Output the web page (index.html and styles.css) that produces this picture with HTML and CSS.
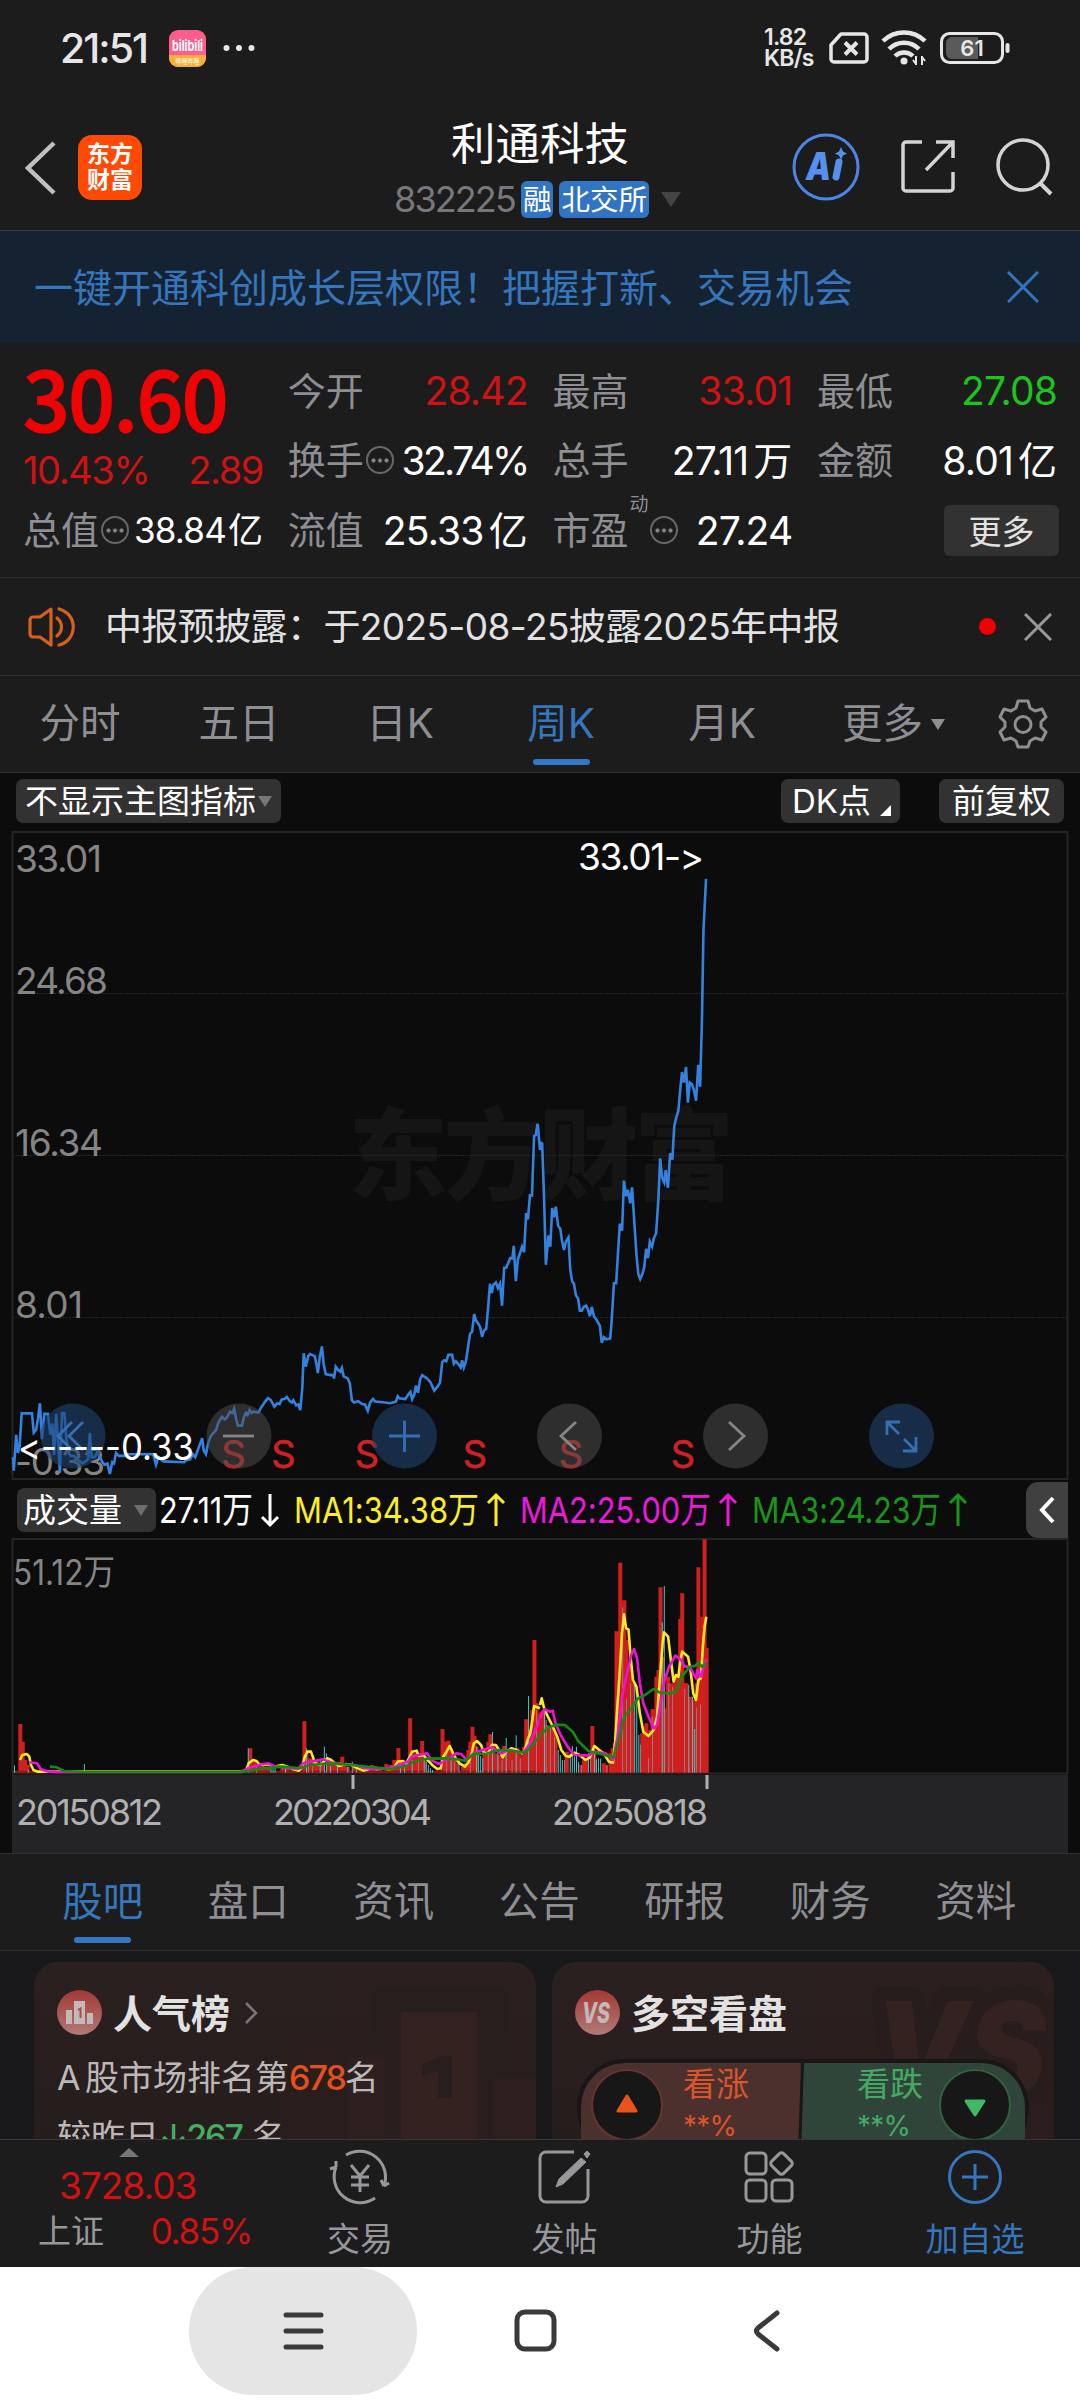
FILE: index.html
```html
<!DOCTYPE html>
<html lang="zh-CN">
<head>
    <meta charset="UTF-8">
    <meta name="viewport" content="width=device-width, initial-scale=1.0">
    <title>利通科技 832225</title>
    <link rel="stylesheet" href="styles.css">
</head>
<body>
    <div class="status-bar">
        <span class="clock">21:51</span>
        <svg class="bili" width="37" height="37" viewBox="0 0 37 37">
            <rect width="37" height="37" rx="9" fill="#fb5d8d"/>
            <path d="M0 25H37V28a9 9 0 0 1-9 9H9a9 9 0 0 1-9-9z" fill="#f5b03c"/>
            <text x="3" y="21" class="bili-name" textLength="31" lengthAdjust="spacingAndGlyphs">bilibili</text>
            <text x="6.500" y="34" class="bili-sub" textLength="24" lengthAdjust="spacingAndGlyphs">哔哩哔哩</text>
        </svg>
        <svg width="32" height="8" viewBox="0 0 32 8" fill="#e6e6e6">
            <circle cx="3.500" cy="4" r="3"/><circle cx="16" cy="4" r="3"/><circle cx="28.500" cy="4" r="3"/>
        </svg>
        <div class="status-right">
            <div class="speed"><span>1.82</span><span>KB/s</span></div>
            <svg width="40" height="32" viewBox="0 0 40 32" fill="none" stroke="#e6e6e6" stroke-width="3.500">
                <path d="M12 2H35a3 3 0 0 1 3 3V27a3 3 0 0 1-3 3H5a3 3 0 0 1-3-3V13z" stroke-linejoin="round"/>
                <path d="M16 10.500l12 12M28 10.500l-12 12" stroke-width="4"/>
            </svg>
            <svg class="wifi" width="47" height="36" viewBox="0 0 47 36" fill="none" stroke="#e6e6e6" stroke-width="4.500">
                <path d="M2 11a30 30 0 0 1 42 0M8 19a21 21 0 0 1 30 0M14 26a13 13 0 0 1 18 0"/>
                <circle cx="23" cy="31" r="3.500" fill="#e6e6e6" stroke="none"/>
                <path d="M35 26v9M35 34l-3-4M41 35v-9M41 27l3 4" stroke-width="2"/>
            </svg>
            <svg width="71" height="32" viewBox="0 0 71 32">
                <rect x="1.500" y="1.500" width="61" height="29" rx="8" fill="none" stroke="#e6e6e6" stroke-width="3"/>
                <path d="M12 5H38V27H12a6 6 0 0 1-6-6V11a6 6 0 0 1 6-6z" fill="#5a5a5a"/>
                <rect x="65.500" y="11" width="4" height="10" rx="2" fill="#e6e6e6"/>
                <text x="32" y="24" text-anchor="middle" class="battery-text">61</text>
            </svg>
        </div>
    </div>

    <header class="header">
        <div class="header-left">
            <svg width="32" height="54" viewBox="0 0 32 54" fill="none" stroke="#c0c0c0" stroke-width="4.500"><path d="M30 2L4 27l26 25"/></svg>
            <div class="logo"><span>东方</span><span>财富</span></div>
        </div>
        <div class="header-title">
            <h1>利通科技</h1>
            <div class="header-sub">
                <span class="code">832225</span>
                <span class="tag">融</span>
                <span class="tag">北交所</span>
                <svg width="20" height="15" viewBox="0 0 20 15"><path d="M0 0H20L10 15z" fill="#444"/></svg>
            </div>
        </div>
        <div class="header-right">
            <svg width="68" height="68" viewBox="0 0 68 68">
                <circle cx="34" cy="34" r="32" fill="none" stroke="#4b86e6" stroke-width="3"/>
                <text x="14" y="47" class="ai-text" textLength="25" lengthAdjust="spacingAndGlyphs">A</text>
                <path d="M47 29L44 44" stroke="#5590ee" stroke-width="7" stroke-linecap="round"/>
                <path d="M49 14l2 4.500 4 2-4 2-2 4.500-2-4.500-4-2 4-2z" fill="#5590ee"/>
            </svg>
            <svg width="56" height="56" viewBox="0 0 56 56" fill="none" stroke="#d4d4d4" stroke-width="3.500">
                <path d="M22 3H6a3 3 0 0 0-3 3V49a3 3 0 0 0 3 3H50a3 3 0 0 0 3-3V33M36 3H53V19M53 3L26 31"/>
            </svg>
            <svg width="58" height="58" viewBox="0 0 58 58" fill="none" stroke="#d4d4d4" stroke-width="3.500">
                <circle cx="27" cy="27" r="25"/><path d="M44 45l11 11" stroke-width="4"/>
            </svg>
        </div>
    </header>

    <div class="banner">
        <span>一键开通科创成长层权限！把握打新、交易机会</span>
        <svg width="32" height="32" viewBox="0 0 32 32" stroke="#3374bd" stroke-width="3"><path d="M1 1l30 30M31 1L1 31"/></svg>
    </div>

    <section class="quote">
        <div class="quote-col first">
            <div class="price">30.60</div>
            <div class="change red"><span>10.43%</span><span>2.89</span></div>
            <div class="cell"><label>总值</label><i class="dots"></i><b class="small">38.84<span>亿</span></b></div>
        </div>
        <div class="quote-col">
            <div class="cell"><label>今开</label><b class="red">28.42</b></div>
            <div class="cell"><label>换手</label><i class="dots"></i><b class="tight">32.74%</b></div>
            <div class="cell"><label>流值</label><b>25.33<span>亿</span></b></div>
        </div>
        <div class="quote-col">
            <div class="cell"><label>最高</label><b class="red">33.01</b></div>
            <div class="cell"><label>总手</label><b>27.11<span>万</span></b></div>
            <div class="cell"><label>市盈</label><sup>动</sup><i class="dots"></i><b>27.24</b></div>
        </div>
        <div class="quote-col">
            <div class="cell"><label>最低</label><b class="green">27.08</b></div>
            <div class="cell"><label>金额</label><b>8.01<span>亿</span></b></div>
            <div class="cell"><button class="more-btn">更多</button></div>
        </div>
    </section>

    <div class="notice">
        <svg width="48" height="42" viewBox="0 0 48 42" fill="none" stroke="#d9601c" stroke-width="3.200">
            <path d="M23 3L12 11H5a3 3 0 0 0-3 3V28a3 3 0 0 0 3 3h7l11 8z" stroke-linejoin="round"/>
            <path d="M29 12c6 5 6 13 0 18M31 3c19 5 19 31 0 36" stroke-linecap="round"/>
        </svg>
        <span class="notice-text">中报预披露：于2025-08-25披露2025年中报</span>
        <i class="red-dot"></i>
        <svg width="28" height="28" viewBox="0 0 28 28" stroke="#999" stroke-width="3"><path d="M1 1l26 26M27 1L1 27"/></svg>
    </div>

    <nav class="period-tabs">
        <span>分时</span>
        <span>五日</span>
        <span>日K</span>
        <span class="active">周K</span>
        <span>月K</span>
        <span class="tab-more">更多<svg width="14" height="11" viewBox="0 0 14 11"><path d="M0 0H14L7 11z" fill="#8e8e93"/></svg></span>
        <svg class="gear" width="50" height="50" viewBox="0 0 50 50" fill="none" stroke="#8e8e93" stroke-width="3" stroke-linejoin="round">
            <path d="M20 2H30L32 9 37 12 44 10 48 18 43 23V28L48 33 44 41 37 39 32 42 30 48H20L18 42 13 39 6 41 2 33 7 28V23L2 18 6 10 13 12 18 9z"/>
            <circle cx="25" cy="25.500" r="8"/>
        </svg>
    </nav>

    <section class="chart-panel">
        <div class="chart-toolbar">
            <span class="chip">不显示主图指标<svg width="14" height="11" viewBox="0 0 14 11"><path d="M0 0H14L7 11z" fill="#777"/></svg></span>
            <span class="chip dk">DK点<svg width="11" height="11" viewBox="0 0 11 11"><path d="M11 0V11H0z" fill="#fff"/></svg></span>
            <span class="chip">前复权</span>
        </div>

        <svg class="price-chart" width="1080" height="656" viewBox="0 824 1080 656">
            <text x="348" y="1192" class="watermark" textLength="386">东方财富</text>
            <path class="grid" d="M12 993.500H1068M12 1155.500H1068M12 1317.500H1068"/>
            <rect class="frame" x="12.500" y="832" width="1055" height="647"/>
            <g class="axis">
                <text x="15" y="872" textLength="87">33.01</text>
                <text x="15" y="994" textLength="93">24.68</text>
                <text x="15" y="1156" textLength="88">16.34</text>
                <text x="15" y="1318" textLength="68">8.01</text>
                <text x="15" y="1475" textLength="90">-0.33</text>
            </g>
            <g class="signal">
                <text x="233.500" y="1468">S</text>
                <text x="283.500" y="1468">S</text>
                <text x="367" y="1468">S</text>
                <text x="475" y="1468">S</text>
                <text x="571" y="1468">S</text>
                <text x="683" y="1468">S</text>
            </g>
            <!-- close price -->
            <g class="price-line">
                <polyline transform="translate(0 830) scale(.34435 .42091)" points="38,1490 40,1522 47,1437 52,1480 57,1465 63,1386 93,1386 98,1432 105,1425 110,1400 116,1362 122,1447 129,1387 139,1387 146,1437 152,1410 157,1485 163,1387 169,1460 174,1527 180,1385 187,1385 193,1450 200,1480 205,1487 215,1487 222,1495 232,1500 240,1505 248,1500 256,1495 261,1432 266,1490 275,1490 283,1478 290,1490 296,1500 303,1508 312,1505 319,1530 326,1502 331,1505 337,1480 345,1487 362,1487 372,1483 445,1483 453,1508 460,1490 475,1500 535,1502 540,1497 552,1495 560,1483 567,1490 575,1472 587,1445 592,1475 598,1483 605,1455 612,1440 620,1432 628,1425 633,1410 640,1400 645,1394 652,1400 658,1397 668,1382 675,1385 680,1375 686,1400 691,1415 703,1415 708,1395 714,1385 719,1390 725,1378 731,1385 737,1382 750,1384 760,1370 770,1358 778,1350 786,1354 797,1370 805,1362 812,1364 818,1353 826,1352 833,1347 842,1357 848,1360 852,1355 860,1367 866,1365 872,1378 878,1325 882,1243 888,1275 895,1250 900,1245 914,1250 919,1270 923,1290 929,1250 935,1227 940,1270 946,1293 960,1295 967,1295 970,1303 975,1275 982,1283 988,1287 993,1278 998,1298 1010,1303 1016,1315 1022,1355 1028,1360 1040,1357 1052,1364 1060,1365 1068,1380 1075,1360 1083,1352 1090,1358 1118,1360 1133,1362 1150,1358 1155,1345 1160,1350 1177,1352 1185,1342 1192,1335 1197,1352 1203,1342 1208,1320 1214,1337 1220,1305 1226,1295 1240,1303 1250,1312 1261,1332 1270,1323 1278,1313 1284,1265 1290,1260 1296,1262 1302,1247 1313,1247 1318,1268 1324,1262 1332,1270 1338,1277 1342,1260 1347,1277 1353,1262 1359,1230 1365,1197 1371,1192 1377,1150 1382,1165 1388,1172 1394,1180 1400,1204 1405,1190 1412,1185 1417,1140 1423,1078 1428,1100 1433,1080 1440,1075 1446,1088 1452,1078 1458,1130 1464,1040 1470,1040 1482,1017 1488,1018 1492,988 1498,1072 1504,1020 1511,1003 1516,990 1522,1003 1528,910 1533,925 1539,868 1545,868 1551,727 1556,725 1561,698"/>
                <polyline transform="translate(500 830) scale(.3699 .42091)" points="102,698 108,760 110,743 114,745 119,870 124,1033 131,963 136,990 141,898 146,920 151,895 157,940 163,948 168,978 173,998 178,978 185,968 190,1045 195,1072 200,1078 205,1105 211,1113 216,1142 221,1142 227,1132 233,1130 238,1140 243,1155 248,1133 254,1155 262,1165 270,1178 275,1218 281,1205 287,1210 298,1208 302,1165 308,1077 314,1077 320,990 324,935 330,952 335,833 341,870 346,855 352,887 357,849 363,930 369,1010 374,1055 379,1067 385,1055 390,1038 395,995 400,1017 405,978 411,990 416,970 422,958 428,880 433,780 438,825 444,837 448,808 454,850 460,768 466,783 471,705 476,685 482,668 487,620 492,575 497,600 503,563 508,648 513,600 519,604 525,620 530,643 536,558 541,610 546,450 550,240 557,116"/>
            </g>
            <!-- floating controls -->
            <g class="ctrl blue">
                <circle cx="73" cy="1436" r="32.500"/>
                <path d="M83 1422L69 1436l14 14M72 1422L58 1436l14 14"/>
            </g>
            <g class="ctrl">
                <circle cx="239" cy="1436" r="32.500"/>
                <path d="M223 1436H254"/>
            </g>
            <g class="ctrl blue">
                <circle cx="404.500" cy="1436" r="32.500"/>
                <path d="M389 1436H420M404.500 1420.500V1452"/>
            </g>
            <g class="ctrl">
                <circle cx="569.500" cy="1436" r="32.500"/>
                <path d="M576 1422L561 1436l15 14"/>
            </g>
            <g class="ctrl">
                <circle cx="735.500" cy="1436" r="32.500"/>
                <path d="M729 1422L744 1436l-15 14"/>
            </g>
            <g class="ctrl blue">
                <circle cx="901.500" cy="1436" r="32.500"/>
                <path d="M887 1435V1422H900M887 1422L899 1434M903 1451H916V1437M916 1451L904 1439"/>
            </g>
            <g class="extreme">
                <text x="578" y="870" textLength="126">33.01-&gt;</text>
                <text x="18" y="1460" textLength="176" lengthAdjust="spacingAndGlyphs">&lt;-----0.33</text>
            </g>
        </svg>

        <div class="volume-head">
            <span class="chip">成交量<svg width="14" height="11" viewBox="0 0 14 11"><path d="M0 0H14L7 11z" fill="#6e6e6e"/></svg></span>
            <svg class="ma-values" width="860" height="46" viewBox="158 1487 860 46">
                <text x="159" y="1523" fill="#fff" textLength="94" lengthAdjust="spacingAndGlyphs">27.11万</text>
                <text x="294" y="1523" fill="#fbee24" textLength="185" lengthAdjust="spacingAndGlyphs">MA1:34.38万</text>
                <text x="520" y="1523" fill="#ee18dc" textLength="191" lengthAdjust="spacingAndGlyphs">MA2:25.00万</text>
                <text x="752" y="1523" fill="#199518" textLength="189" lengthAdjust="spacingAndGlyphs">MA3:24.23万</text>
                <g fill="none" stroke-width="3">
                    <path stroke="#fff" d="M270 1494V1525M262 1517l8 8 8-8"/>
                    <path stroke="#fbee24" d="M496 1526V1495M488 1503l8-8 8 8"/>
                    <path stroke="#ee18dc" d="M728 1526V1495M720 1503l8-8 8 8"/>
                    <path stroke="#199518" d="M958 1526V1495M950 1503l8-8 8 8"/>
                </g>
            </svg>
            <span class="collapse"><svg width="16" height="28" viewBox="0 0 16 28" fill="none" stroke="#fff" stroke-width="4"><path d="M14 2L3 14l11 12"/></svg></span>
        </div>

        <svg class="volume-chart" width="1080" height="315" viewBox="0 1538 1080 315">
            <rect x="12" y="1775" width="1056" height="78" fill="#242426"/>
            <path class="frame" d="M12.500 1774V1539H1067.500V1774M12 1773.500H1068"/>
            <text x="13" y="1585" class="vol-max" textLength="102" lengthAdjust="spacingAndGlyphs">51.12万</text>
            <g transform="translate(0 1470) scale(.34435 .33333)">
                <path class="bar-up" d="M59 908V762M66 908V815M73 908V870M80 908V885M727 908V835M733 908V885M739 908V875M745 908V885M752 908V888M760 908V885M770 908V890M780 908V895M820 908V882M826 908V890M835 908V890M850 908V893M878 908V890M884 908V754M890 908V850M896 908V865M902 908V865M908 908V870M914 908V878M920 908V870M926 908V880M938 908V880M955 908V885M965 908V885M975 908V882M988 908V875M994 908V860M1000 908V880M1010 908V890M1030 908V890M1045 908V895M1065 908V895M1080 908V885M1090 908V888M1105 908V890M1122 908V882M1135 908V885M1145 908V870M1157 908V834M1163 908V870M1170 908V880M1180 908V880M1191 908V745M1197 908V850M1203 908V860M1209 908V850M1215 908V855M1221 908V850M1226 908V813M1232 908V860M1285 908V777M1291 908V815M1297 908V830M1302 908V812M1308 908V835M1314 908V850M1320 908V870M1326 908V880M1345 908V890M1352 908V880M1360 908V840M1366 908V815M1372 908V770M1378 908V797M1384 908V830M1407 908V840M1412 908V840M1418 908V815M1424 908V793M1430 908V820M1438 908V850M1446 908V855M1452 908V878M1458 908V850M1464 908V828M1475 908V845M1481 908V840M1487 908V838M1495 908V845M1503 908V835M1510 908V855M1517 908V865M1522 908V830M1528 908V748M1540 908V780M1546 908V720M1552 908V510M1558 908V700M1565 908V730"/>
                <path class="bar-base" d="M38 905H716M716 905H1568"/>
                <path class="bar-down" d="M42 908V886M82 908V899M245 908V882M721 908V835M787 908V890M793 908V895M799 908V893M829 908V890M890 908V835M930 908V870M942 908V830M948 908V850M960 908V888M980 908V885M1010 908V890M1023 908V875M1036 908V888M1163 908V880M1175 908V885M1197 908V870M1232 908V870M1238 908V875M1244 908V885M1250 908V895M1256 908V900M1310 908V860M1333 908V880M1384 908V830M1390 908V850M1396 908V858M1402 908V865M1430 908V786M1446 908V840M1470 908V804M1499 908V796M1535 908V678"/>
                <path class="bar-mix" d="M745 908V890M896 908V870M908 908V878M1215 908V870M1297 908V850M1320 908V875M1366 908V850M1418 908V850M1458 908V870M1487 908V870M1511 908V866M1558 908V720"/>
                <polyline class="ma yellow" points="58,870 65,855 78,852 85,860 90,885 97,900 110,905 700,905 715,900 722,880 735,870 745,873 752,882 765,885 780,883 795,890 820,885 835,890 850,897 868,902 878,890 885,860 893,845 903,845 910,865 915,880 930,885 940,875 950,865 962,870 970,878 985,888 1005,882 1020,885 1035,893 1055,902 1080,895 1095,898 1110,895 1130,898 1145,892 1155,875 1170,873 1180,880 1190,860 1197,845 1210,842 1216,858 1230,855 1240,868 1255,885 1270,897 1280,895 1287,860 1297,845 1306,828 1316,850 1325,868 1335,880 1350,890 1360,878 1370,850 1376,820 1385,813 1397,825 1405,848 1418,850 1428,825 1440,825 1452,845 1460,862 1470,845 1485,835 1500,840 1515,850 1523,845 1532,810 1540,790 1546,750 1551,708 1568,715"/>
                <polyline class="ma pink" points="85,877 108,880 118,897 140,905 180,906 700,906 720,895 750,885 780,880 795,888 830,893 865,897 880,880 900,875 940,868 960,878 1000,883 1030,885 1060,895 1090,898 1140,893 1170,880 1185,875 1195,860 1215,855 1240,850 1255,872 1275,882 1300,868 1325,850 1340,853 1355,870 1375,850 1400,840 1430,832 1455,850 1480,840 1520,848 1540,820 1568,745"/>
                <polyline class="ma green" points="145,890 165,892 185,903 250,906 700,906 720,903 760,895 820,890 870,895 900,885 960,880 1020,885 1080,892 1130,897 1180,888 1200,875 1240,866 1290,865 1330,868 1350,872 1380,850 1410,852 1450,840 1490,843 1525,848 1545,828 1568,795"/>
            </g>
            <g transform="translate(540 1470) scale(.34435 .33333)">
                <path class="bar-up" d="M4 908V725M10 908V720M20 908V765M26 908V770M32 908V770M38 908V775M45 908V790M78 908V845M120 908V885M128 908V870M134 908V865M152 908V768M158 908V850M185 908V880M192 908V885M205 908V850M211 908V835M217 908V820M222 908V484M228 908V560M233 908V278M239 908V560M245 908V391M251 908V510M257 908V600M262 908V590M268 908V640M297 908V790M303 908V770M309 908V760M315 908V790M321 908V780M327 908V717M333 908V720M338 908V620M344 908V600M350 908V352M356 908V560M366 908V715M372 908V620M378 908V640M384 908V640M390 908V640M396 908V620M402 908V620M407 908V447M413 908V370M419 908V640M425 908V640M431 908V680M437 908V680M443 908V690M455 908V640M460 908V292M466 908V620M472 908V440M478 908V208M484 908V534"/>
                <path class="bar-down" d="M13 908V730M53 908V840M59 908V855M65 908V870M88 908V850M94 908V828M100 908V860M106 908V830M112 908V875M141 908V850M158 908V840M164 908V868M170 908V865M176 908V866M275 908V640M281 908V700M287 908V795M355 908V457M361 908V348M432 908V645M443 908V680M449 908V777"/>
                <path class="bar-mix" d="M18 908V750M30 908V770M42 908V800M71 908V870M121 908V885M147 908V850M194 908V885M240 908V412M251 908V686M263 908V640M292 908V824M315 908V865M327 908V740M374 908V640M385 908V650M420 908V657M432 908V700M455 908V712M466 908V703"/>
                <polyline class="ma yellow" points="0,705 5,685 12,715 22,738 35,765 50,800 62,840 75,858 85,860 100,848 115,855 132,870 145,862 158,828 172,840 185,850 200,875 212,878 218,820 224,720 232,600 238,490 244,433 250,475 257,478 263,560 270,630 280,650 290,730 300,785 315,798 330,780 340,740 350,600 356,520 360,487 372,500 380,570 388,635 395,615 402,620 408,570 413,545 430,560 437,600 445,670 453,690 460,630 467,625 473,530 478,470 483,440"/>
                <polyline class="ma pink" points="0,745 12,718 30,725 37,722 45,760 60,795 80,830 100,855 140,857 160,845 190,850 213,870 225,800 240,670 255,600 265,555 273,537 282,565 290,640 300,700 315,740 330,775 340,765 350,700 362,630 375,590 393,557 410,570 420,590 430,590 440,600 453,625 458,600 468,620 475,590 483,568"/>
                <polyline class="ma green" points="0,795 25,772 50,764 72,765 95,785 110,812 140,843 180,853 213,863 228,810 245,740 265,715 285,685 305,675 330,657 348,668 375,670 392,667 402,650 412,620 435,590 450,588 460,578 470,590 483,578"/>
            </g>
            <path d="M353 1775V1789M707 1775V1789" stroke="#b0b0b0" stroke-width="3"/>
            <g class="dates">
                <text x="16" y="1825" textLength="147">20150812</text>
                <text x="273" y="1825" textLength="159">20220304</text>
                <text x="552" y="1825" textLength="156">20250818</text>
            </g>
        </svg>
    </section>

    <nav class="info-tabs">
        <span class="active">股吧</span>
        <span>盘口</span>
        <span>资讯</span>
        <span>公告</span>
        <span>研报</span>
        <span>财务</span>
        <span>资料</span>
    </nav>

    <section class="cards">
        <div class="card">
            <svg class="card-bg" width="502" height="200" viewBox="0 0 502 200">
                <path d="M300 0H502V200H245V74H300z" fill="#33221f" opacity=".3"/>
                <path d="M338 26H474V200H338z" fill="#271e1d"/>
                <path d="M367 50H443V200H367z" fill="#342221"/>
                <path d="M388 102l20-8h10v42h-14v-27l-16 5z" fill="#271e1d"/>
                <path d="M314 95H350V200H314zM461 117H502V200H461z" fill="#2e201f"/>
            </svg>
            <div class="card-title">
                <svg width="45" height="45" viewBox="0 0 45 45">
                    <defs>
                        <linearGradient id="badge" x1="0" y1="0" x2="0" y2="1"><stop offset="0" stop-color="#a33834"/><stop offset="1" stop-color="#b07a76"/></linearGradient>
                    </defs>
                    <circle cx="22.500" cy="22.500" r="22.500" fill="url(#badge)"/>
                    <path d="M9 20H15V34H9zM17 11H28V34H17zM30 23H36V34H30z" fill="#c4b8b8"/>
                    <path d="M21 20l2.500-1.500V28" stroke="#a84a47" stroke-width="2" fill="none"/>
                </svg>
                <h2>人气榜</h2>
                <svg class="arrow" width="14" height="22" viewBox="0 0 14 22" fill="none" stroke="#777" stroke-width="2.500"><path d="M2 1l10 10L2 21"/></svg>
            </div>
            <p>A 股市场排名第<em class="orange">678</em>名</p>
            <p>较昨日<em class="up">↓267</em> 名</p>
        </div>
        <div class="card">
            <svg class="card-bg" width="502" height="200" viewBox="0 0 502 200">
                <path d="M260 0H502V200H280z" fill="#33221f" opacity=".3"/>
                <text x="322" y="134" class="bg-vs" textLength="172" lengthAdjust="spacingAndGlyphs">VS</text>
            </svg>
            <div class="card-title">
                <svg width="45" height="45" viewBox="0 0 45 45">
                    <circle cx="22.500" cy="22.500" r="22.500" fill="url(#badge)"/>
                    <text x="7" y="33" class="vs" textLength="28" lengthAdjust="spacingAndGlyphs">VS</text>
                </svg>
                <h2>多空看盘</h2>
            </div>
            <svg class="vote" width="454" height="96" viewBox="0 0 454 96">
                <rect x="1" y="1" width="452" height="97" rx="48" fill="#181616"/>
                <path d="M49 5H225L222 96H5V49a44 44 0 0 1 44-44z" fill="#4b302e"/>
                <path d="M228 5H405a44 44 0 0 1 44 44V96H225z" fill="#30453a"/>
                <circle cx="51" cy="47" r="35" fill="#171717" stroke="#653532" stroke-width="2"/>
                <circle cx="399" cy="47" r="35" fill="#171717" stroke="#30623f" stroke-width="2"/>
                <path d="M51 38L60 53H42z" fill="#e8541c" stroke="#e8541c" stroke-width="3" stroke-linejoin="round"/>
                <path d="M399 57L390 43H408z" fill="#41b863" stroke="#41b863" stroke-width="3" stroke-linejoin="round"/>
                <text x="107" y="38" class="vote-label" fill="#d9552a">看涨</text>
                <text x="107" y="78" class="vote-num" fill="#d9552a" textLength="54">**%</text>
                <text x="281" y="38" class="vote-label" fill="#45a965">看跌</text>
                <text x="281" y="78" class="vote-num" fill="#45a965" textLength="54">**%</text>
            </svg>
        </div>
    </section>

    <footer class="toolbar">
        <div class="index">
            <svg width="20" height="9" viewBox="0 0 20 9"><path d="M10 0L20 9H0z" fill="#777"/></svg>
            <div class="index-value">3728.03</div>
            <div class="index-row"><span>上证</span><span class="index-pct">0.85%</span></div>
        </div>
        <div class="tool">
            <svg width="62" height="56" viewBox="0 0 62 56" fill="none" stroke="#98989c" stroke-width="3">
                <path d="M17 6A26 26 0 0 1 55 37M46 49A26 26 0 0 1 7 18M55 37l5-3M55 37l-3-6M7 18l-6 2M7 18V12"/>
                <path d="M22 16l9 11 9-11M31 27V43M22 28H40M22 36H40"/>
            </svg>
            <span>交易</span>
        </div>
        <div class="tool">
            <svg width="54" height="56" viewBox="0 0 54 56" fill="none" stroke="#98989c" stroke-width="3">
                <path d="M36 3H8a6 6 0 0 0-6 6V47a6 6 0 0 0 6 6H44a6 6 0 0 0 6-6V20"/>
                <path d="M43 9l5 4L25 35l-7 3 3-8zM46 5l3-3 3 3-3 4z" fill="#98989c" stroke-width="1"/>
            </svg>
            <span>发帖</span>
        </div>
        <div class="tool">
            <svg width="52" height="56" viewBox="0 0 52 56" fill="none" stroke="#98989c" stroke-width="3">
                <rect x="2" y="4" width="20" height="21" rx="4"/><rect x="2" y="31" width="20" height="21" rx="4"/><rect x="28" y="31" width="20" height="21" rx="4"/>
                <rect x="29" y="6" width="17" height="17" rx="3" transform="rotate(45 37.500 14.500)"/>
            </svg>
            <span>功能</span>
        </div>
        <div class="tool blue">
            <svg width="56" height="56" viewBox="0 0 56 56" fill="none" stroke="#3576bd" stroke-width="3">
                <circle cx="28" cy="28" r="25.500"/><path d="M15 28H41M28 15V41"/>
            </svg>
            <span>加自选</span>
        </div>
    </footer>

    <div class="sys-nav">
        <div class="pressed">
            <svg width="41" height="40" viewBox="0 0 41 40" stroke="#3a3a3a" stroke-width="5" stroke-linecap="round"><path d="M3 4H38M3 20H38M3 36H38"/></svg>
        </div>
        <svg width="43" height="43" viewBox="0 0 43 43" fill="none" stroke="#3a3a3a" stroke-width="5"><rect x="3" y="3" width="37" height="37" rx="8"/></svg>
        <svg width="28" height="44" viewBox="0 0 28 44" fill="none" stroke="#3a3a3a" stroke-width="5" stroke-linecap="round" stroke-linejoin="round"><path d="M24 4L5 19q-3 3 0 6l19 15"/></svg>
    </div>
</body>
</html>
```
FILE: styles.css
```css
:root {
    --bg: #1c1c1c;
    --chart-bg: #0c0c0c;
    --line: #303032;
    --gray: #8e8e93;
    --blue: #3576bd;
    --red: #d11212;
    --green: #1cc41c;
}
* {
    box-sizing: border-box;
}
body {
    margin: 0;
    width: 1080px;
    height: 2400px;
    overflow: hidden;
    background: var(--bg);
    color: #fff;
    font-family: Inter, "Noto Sans CJK SC", sans-serif;
    font-feature-settings: "calt" 0;
    font-variant-ligatures: none;
    line-height: 1;
}
svg {
    display: block;
    flex: none;
}
svg path, svg polyline {
    vector-effect: non-scaling-stroke;
}
h1, h2, p {
    margin: 0;
}
span, label, b, em {
    white-space: nowrap;
}

/* Status bar */
.status-bar {
    display: flex;
    align-items: center;
    height: 96px;
    padding: 0 69px 0 60px;
}
.clock {
    width: 109px;
    font-size: 41px;
    font-weight: 500;
    letter-spacing: -2px;
    color: #e6e6e6;
}
.bili {
    margin-right: 17px;
}
.bili-name {
    font-size: 15px;
    font-weight: 700;
    fill: #fff;
}
.bili-sub {
    font-size: 7px;
    fill: #fff;
}
.status-right {
    display: flex;
    align-items: center;
    gap: 12px;
    margin-left: auto;
}
.speed {
    display: flex;
    flex-direction: column;
    width: 53px;
    font-size: 23px;
    line-height: 21px;
    font-weight: 600;
    letter-spacing: -0.8px;
    color: #e6e6e6;
}
.battery-text {
    font-size: 22px;
    font-weight: 600;
    fill: #e6e6e6;
}

/* Header */
.header {
    display: grid;
    grid-template-columns: 280px 1fr 280px;
    height: 135px;
    border-bottom: 1px solid #36383a;
}
.header-left {
    display: flex;
    align-items: center;
    gap: 22px;
    height: 143px;
    padding-left: 24px;
}
.logo {
    display: flex;
    flex-direction: column;
    justify-content: center;
    gap: 3px;
    width: 64px;
    height: 65px;
    border-radius: 14px;
    background: #ff4a05;
    font-size: 23px;
    font-weight: 700;
    text-align: center;
}
.header-title {
    padding-top: 26px;
}
h1 {
    font-size: 44.500px;
    font-weight: 400;
    text-align: center;
}
.header-sub {
    display: flex;
    align-items: center;
    justify-content: center;
    gap: 6px;
    margin: 14px 5px 0 0;
}
.code {
    font-size: 36px;
    letter-spacing: -1.9px;
    color: #77777c;
}
.tag {
    height: 37px;
    padding: 0 2px;
    border-radius: 6px;
    background: #3074c3;
    font-size: 28.500px;
    line-height: 38px;
}
.header-sub svg {
    margin-left: 6px;
}
.header-right {
    display: flex;
    align-items: center;
    justify-content: flex-end;
    gap: 40px;
    height: 142px;
    padding-right: 26px;
}
.ai-text {
    font-size: 38px;
    font-weight: 900;
    font-style: italic;
    fill: #5590ee;
}

/* Banner */
.banner {
    display: flex;
    align-items: center;
    justify-content: space-between;
    height: 112px;
    padding: 0 41px 0 34px;
    background: #152231;
    color: var(--blue);
    font-size: 39px;
}

/* Quote */
.quote {
    display: grid;
    grid-template-columns: repeat(4, 240px);
    gap: 24.700px;
    height: 235px;
    padding: 13px 25px 0 23px;
    border-bottom: 1px solid #2b2b2d;
}
.quote-col {
    display: grid;
    grid-template-rows: 69px 70px 70px;
}
.quote-col.first {
    grid-template-rows: 89px 50px 70px;
}
.cell {
    display: flex;
    align-items: center;
    font-size: 38px;
}
.cell label {
    color: var(--gray);
}
.cell b {
    margin-left: auto;
    font-weight: 400;
    font-size: 39px;
    letter-spacing: -0.800px;
}
.cell b span {
    margin-left: 5px;
    letter-spacing: 0;
}
.cell b.small {
    font-size: 35px;
}
.cell b.small span {
    margin-left: 2px;
}
.cell b.tight {
    letter-spacing: -2.600px;
}
.cell sup {
    align-self: flex-start;
    margin-left: 1px;
    font-size: 19px;
    color: var(--gray);
}
.dots {
    flex: none;
    width: 28px;
    height: 28px;
    margin-left: 2px;
    padding: 0 2px;
    border: 2px solid #68686c;
    border-radius: 50%;
    background: radial-gradient(circle, #85858a 1.700px, transparent 2.300px) center / 6.500px 6.500px repeat-x;
    background-clip: content-box;
}
.price {
    font-family: "Noto Sans CJK SC", sans-serif;
    font-size: 82px;
    line-height: 82px;
    font-weight: 500;
    letter-spacing: -1.500px;
    color: #ee0404;
    -webkit-text-stroke: 1.500px #ee0404;
}
.change {
    display: flex;
    align-items: center;
    justify-content: space-between;
    font-size: 38px;
    letter-spacing: -1.400px;
}
.red, .cell b.red {
    color: var(--red);
}
.cell b.green {
    color: var(--green);
}
.more-btn {
    width: 115px;
    height: 51px;
    margin: 0 -2px 0 auto;
    padding: 0;
    border: none;
    border-radius: 6px;
    background: #323232;
    color: #e2e2e2;
    font: 33px Inter, "Noto Sans CJK SC", sans-serif;
}

/* Notice */
.notice {
    display: flex;
    align-items: center;
    height: 98px;
    padding: 0 28px;
    border-bottom: 1px solid #303032;
}
.notice-text {
    margin-left: 29px;
    font-size: 37px;
    letter-spacing: -0.600px;
    color: #e2e2e2;
}
.red-dot {
    width: 17px;
    height: 17px;
    margin: 0 28px 0 auto;
    border-radius: 50%;
    background: #f00000;
}

/* Period tabs */
.period-tabs {
    display: grid;
    grid-template-columns: 160px 158px 164px 158px 164px 179px 97px;
    align-items: center;
    height: 97px;
    border-bottom: 1px solid var(--line);
    color: var(--gray);
    font-size: 40.500px;
    text-align: center;
}
.period-tabs .active,
.info-tabs .active {
    position: relative;
    color: var(--blue);
}
.period-tabs .active::after,
.info-tabs .active::after {
    content: "";
    position: absolute;
    left: 50%;
    bottom: -21px;
    width: 57px;
    height: 6px;
    margin-left: -28.500px;
    border-radius: 3px;
    background: #3477c4;
}
.period-tabs .gear {
    margin-left: 15px;
}
.tab-more {
    display: flex;
    align-items: center;
    justify-content: center;
    gap: 8px;
}

/* Charts */
.chart-panel {
    background: var(--chart-bg);
}
.chart-toolbar {
    display: flex;
    align-items: center;
    gap: 39px;
    height: 51px;
    padding: 5px 16px 0;
}
.chip {
    display: flex;
    align-items: center;
    height: 44px;
    padding: 0 9px;
    border-radius: 7px;
    background: #323232;
    font-size: 33px;
}
.chip svg {
    margin-left: 2px;
}
.chart-toolbar .chip:first-child {
    width: 265px;
    margin-right: auto;
}
.chart-toolbar .chip:last-child {
    width: 125px;
    padding: 0 13px;
}
.dk {
    width: 119px;
    padding-left: 11px;
}
.dk svg {
    align-self: flex-end;
    margin: 0 0 7px 9px;
}
.watermark {
    font-size: 100px;
    font-weight: 900;
    fill: #151515;
}
.frame {
    fill: none;
    stroke: #242426;
    stroke-width: 2;
}
.grid {
    stroke: #252525;
    stroke-width: 1;
    stroke-dasharray: 2 1;
}
.axis text {
    font-size: 37px;
    fill: #858585;
}
.signal text {
    font-size: 38px;
    text-anchor: middle;
    fill: #cd2222;
    stroke: #cd2222;
    stroke-width: .6;
}
.price-line polyline {
    fill: none;
    stroke: #3581df;
    stroke-width: 2.600;
}
.extreme text {
    font-size: 37px;
    fill: #fff;
}
.ctrl circle {
    fill: #505050;
    fill-opacity: .5;
}
.ctrl path {
    fill: none;
    stroke: #868686;
    stroke-width: 2.800;
}
.ctrl.blue circle {
    fill: #1e4270;
    fill-opacity: .6;
}
.ctrl.blue path {
    stroke: #356fb2;
}
.volume-head {
    display: flex;
    align-items: center;
    height: 58px;
    padding: 2px 12px 0 17px;
}
.volume-head .chip {
    width: 139px;
    padding: 0 6px;
}
.volume-head .chip svg {
    margin-left: 12px;
}
.ma-values {
    margin-left: 2px;
    margin-right: auto;
    font-size: 36px;
}
.collapse {
    display: flex;
    align-items: center;
    justify-content: center;
    width: 42px;
    height: 56px;
    border-radius: 12px 0 0 12px;
    background: #404040;
}
.vol-max {
    font-size: 35px;
    fill: #858585;
}
.bar-up {
    stroke: #cf1f1f;
    stroke-width: 4;
}
.bar-base {
    stroke: #8c1a1a;
    stroke-width: 2;
}
.bar-down {
    stroke: #4fc4c4;
    stroke-width: 1;
}
.bar-mix {
    stroke: #9c7c7c;
    stroke-width: 1;
}
.ma {
    fill: none;
    stroke-width: 2.600;
    stroke-linejoin: round;
}
.ma.yellow {
    stroke: #ffe920;
}
.ma.pink {
    stroke: #f010dd;
}
.ma.green {
    stroke: #148a10;
}
.dates text {
    font-size: 36px;
    fill: #b0b0b0;
}

/* Info tabs */
.info-tabs {
    display: grid;
    grid-template-columns: repeat(7, 145.500px);
    align-items: center;
    padding-left: 30px;
    height: 98px;
    border-top: 1px solid var(--line);
    border-bottom: 1px solid var(--line);
    color: var(--gray);
    font-size: 40.500px;
    text-align: center;
}

/* Cards */
.cards {
    display: flex;
    gap: 16px;
    height: 188px;
    padding: 11px 26px 0 34px;
    background: #18181a;
    overflow: hidden;
}
.card {
    position: relative;
    width: 502px;
    height: 240px;
    padding: 28px 23px;
    border-radius: 24px;
    background: linear-gradient(#2a201f, #241c1c);
    overflow: hidden;
}
.card-bg {
    position: absolute;
    top: 0;
    left: 0;
}
.card-title {
    display: flex;
    position: relative;
    align-items: center;
    height: 45px;
    color: #e2e2e2;
}
h2 {
    margin-left: 11px;
    padding-top: 1px;
    font-size: 39px;
    font-weight: 700;
}
.arrow {
    margin-left: 14px;
}
.card p {
    position: relative;
    margin-top: 26px;
    font-size: 34px;
    word-spacing: -5px;
    color: #bcb8b8;
}
.card p + p {
    margin-top: 25px;
    word-spacing: 0;
}
.card em {
    font-style: normal;
    font-weight: 500;
    letter-spacing: -2px;
}
.orange {
    color: #e2501e;
}
.up {
    color: #43ae62;
}
.bg-vs {
    font-size: 130px;
    font-weight: 900;
    font-style: italic;
    fill: #33221f;
    stroke: #271d1c;
    stroke-width: 30;
    stroke-linejoin: round;
    paint-order: stroke;
}
.vs {
    font-size: 29px;
    font-weight: 800;
    font-style: italic;
    fill: #c4b8b8;
}
.vote {
    position: relative;
    margin: 23px 0 0 1px;
}
.vote-label {
    font-size: 33px;
}
.vote-num {
    font-size: 28px;
}

/* Bottom toolbar */
.toolbar {
    display: grid;
    grid-template-columns: 258px 204px 205px 205px 206px;
    height: 128px;
    border-top: 1px solid #39393b;
    color: #98989c;
    font-size: 33px;
}
.index {
    padding-top: 8px;
}
.index svg {
    margin-left: 119px;
}
.index-value {
    margin: 10px 0 0 59px;
    font-size: 37px;
    letter-spacing: -1px;
    color: #d31111;
}
.index-row {
    display: flex;
    justify-content: space-between;
    align-items: center;
    margin-top: 10px;
    padding: 0 6px 0 38px;
}
.index-pct {
    font-size: 35px;
    letter-spacing: -1.300px;
    color: #d31111;
}
.tool {
    display: flex;
    flex-direction: column;
    align-items: center;
    gap: 18px;
    padding-top: 9px;
}
.tool.blue {
    color: var(--blue);
}

/* System navigation */
.sys-nav {
    display: flex;
    align-items: center;
    height: 133px;
    padding: 0 0 6px 189px;
    background: #fff;
}
.pressed {
    display: flex;
    align-items: center;
    justify-content: center;
    width: 228px;
    height: 128px;
    margin-right: 97px;
    border-radius: 64px;
    background: #e5e5e5;
}
.sys-nav > svg + svg {
    margin-left: 196px;
}
```
